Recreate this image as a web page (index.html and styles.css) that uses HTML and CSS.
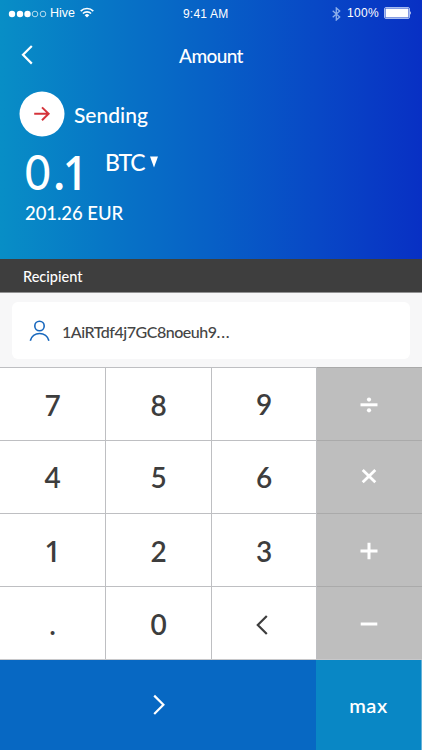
FILE: index.html
```html
<!DOCTYPE html>
<html lang="en">
<head>
<meta charset="utf-8">
<title>Amount</title>
<link rel="stylesheet" href="styles.css">
</head>
<body>
<main class="screen">
  <header class="hero">
    <div class="status">
      <div class="status-left">
        <svg class="signal" width="39" height="8" viewBox="0 0 39 8"><g fill="#fff"><circle cx="4" cy="4" r="3.2"/><circle cx="12" cy="4" r="3.2"/><circle cx="19.5" cy="4" r="3.2"/></g><g fill="none" stroke="#fff" stroke-width=".7"><circle cx="27" cy="4" r="2.8"/><circle cx="35" cy="4" r="2.8"/></g></svg>
        <span class="carrier">Hive</span>
        <svg class="wifi" width="14" height="11" viewBox="0 0 14 11"><g fill="none" stroke="#fff" stroke-width="1.6"><path d="M.7 4.1a9 9 0 0 1 12.6 0"/><path d="M2.9 6.5a5.9 5.9 0 0 1 8.2 0"/></g><path d="M4.7 8.3a3.2 3.2 0 0 1 4.6 0L7 10.6z" fill="#fff"/></svg>
      </div>
      <span class="clock">9:41 AM</span>
      <div class="status-right">
        <svg class="bluetooth" width="9" height="14" viewBox="0 0 9 14"><path d="M.7 3.7l7 6.2L4.3 13V1l3.4 3.1-7 6.2" fill="none" stroke="#8eb0eb" stroke-width="1.3"/></svg>
        <span class="percent">100%</span>
        <svg class="battery" width="28" height="12" viewBox="0 0 28 12"><rect x=".5" y=".5" width="25" height="11" rx="1.5" fill="none" stroke="#a8bdf0"/><rect x="1.5" y="1.5" width="23" height="9" rx=".5" fill="#fff"/><path d="M26.2 4q1.6 2 0 4z" fill="#fff"/></svg>
      </div>
    </div>
    <div class="nav">
      <svg class="back" width="14" height="22" viewBox="0 0 14 22"><path d="M11.8 2L3 10.8l8.8 8.8" fill="none" stroke="#fff" stroke-width="2.2"/></svg>
      <h1 class="title">Amount</h1>
    </div>
    <div class="direction">
      <svg class="badge" width="46" height="46" viewBox="0 0 46 46"><circle cx="23" cy="23" r="22.5" fill="#fff"/><path d="M15.2 22.8h14.4M23 16.4l6.6 6.4-6.6 6.4" fill="none" stroke="#d5343b" stroke-width="2"/></svg>
      <span class="sending">Sending</span>
    </div>
    <div class="amount">
      <span class="value">0<span class="point">.</span><span class="one">1</span></span>
      <span class="currency">BTC</span>
      <svg class="caret" width="8" height="12" viewBox="0 0 8 12"><path d="M0 .5h8L4 11.5z" fill="#fff"/></svg>
    </div>
    <div class="fiat">201.26 EUR</div>
  </header>
  <h2 class="section"><span class="section-label">Recipient</span></h2>
  <div class="panel">
    <div class="field">
      <svg class="person" width="22" height="22" viewBox="0 0 22 22"><g fill="none" stroke="#1767bd" stroke-width="1.6"><circle cx="10.5" cy="6" r="4.7"/><path d="M1.3 20.7a9.6 9.6 0 0 1 18.6 0"/></g></svg>
      <span class="address">1AiRTdf4j7GC8noeuh9<span class="dots">...</span></span>
    </div>
  </div>
  <div class="keypad">
    <div class="key"><span>7</span></div><div class="key"><span>8</span></div><div class="key nine"><span>9</span></div>
    <div class="key op"><svg width="18" height="18" viewBox="0 0 18 18"><path d="M.5 8.8h17" stroke="#fff" stroke-width="3"/><circle cx="9" cy="3.6" r="2.1" fill="#fff"/><circle cx="9" cy="14.3" r="2.1" fill="#fff"/></svg></div>
    <div class="key four"><span>4</span></div><div class="key four"><span>5</span></div><div class="key four"><span>6</span></div>
    <div class="key op times"><svg width="18" height="18" viewBox="0 0 18 18"><path d="M2.7 3l12.6 12.3M15.3 3L2.7 15.3" stroke="#fff" stroke-width="2.8"/></svg></div>
    <div class="key"><span class="one">1</span></div><div class="key"><span>2</span></div><div class="key"><span>3</span></div>
    <div class="key op"><svg width="18" height="18" viewBox="0 0 18 18"><path d="M.5 9h17M9 .8v16.4" stroke="#fff" stroke-width="3"/></svg></div>
    <div class="key"><span>.</span></div><div class="key"><span>0</span></div>
    <div class="key erase"><svg width="14" height="22" viewBox="0 0 14 22"><path d="M11.8 2L2.8 11l9 9" fill="none" stroke="#3d3d3d" stroke-width="2.2"/></svg></div>
    <div class="key op"><svg width="18" height="18" viewBox="0 0 18 18"><path d="M.7 9h16.6" stroke="#fff" stroke-width="3"/></svg></div>
  </div>
  <footer class="actions">
    <div class="next"><svg width="14" height="22" viewBox="0 0 14 22"><path d="M2.2 1.6l9.2 9.2-9.2 9.2" fill="none" stroke="#fff" stroke-width="2.2"/></svg></div>
    <div class="max"><span>max</span></div>
  </footer>
</main>
</body>
</html>
```
FILE: styles.css
```css
* { box-sizing: border-box; }
body { margin: 0; font-family: Lato, "Liberation Sans", sans-serif; }
svg { display: block; flex: none; }
span { white-space: nowrap; }
.screen { width: 422px; height: 750px; overflow: hidden; display: flex; flex-direction: column; background: #fff; }
.hero { height: 259px; color: #fff; background: linear-gradient(90deg, #088ec6 0%, #0776c6 25%, #0760c6 50%, #0848c6 75%, #0830c4 100%); }
.status { height: 26px; display: grid; grid-template-columns: 183px auto 1fr; font: 12px/14px "Liberation Sans", sans-serif; }
.status-left, .status-right { display: flex; align-items: flex-start; }
.status-left { padding-left: 8px; }
.signal { margin-top: 10px; }
.carrier { margin: 6px 0 0 3px; font-size: 12.5px; }
.wifi { margin: 7px 0 0 5px; }
.clock { margin-top: 7px; font-size: 12px; letter-spacing: .2px; }
.status-right { justify-content: flex-end; padding-right: 10px; }
.bluetooth { margin: 7px 6px 0 0; }
.percent { margin: 6px 5px 0 0; letter-spacing: .3px; }
.battery { margin-top: 7px; }
.nav { height: 58px; display: grid; grid-template-columns: 1fr auto 1fr; align-items: start; }
.back { margin: 18px 0 0 20px; }
.title { margin: 19px 0 0; font-size: 19px; line-height: 22px; font-weight: 500; letter-spacing: -.6px; }
.direction { display: flex; padding: 7px 0 0 19px; height: 60px; }
.sending { margin: 11px 0 0 9px; font-size: 21px; line-height: 26px; font-weight: 500; }
.amount { display: flex; height: 55px; padding-left: 25px; }
.value { display: flex; flex: none; width: 80px; font-size: 48px; line-height: 56px; font-weight: 500; transform: scaleX(.91); transform-origin: left; }
.point { width: 14px; margin-left: 4px; font-weight: 700; }
.value .one { margin-left: -4px; font-weight: 600; font-size: 47px; }
.one { font-family: "Open Sans", Lato, sans-serif; }
.currency { margin-top: 5px; font-size: 23px; line-height: 26px; letter-spacing: -1.2px; font-weight: 500; }
.caret { margin: 12px 0 0 5.5px; }
.fiat { padding: 1px 0 0 25px; font-size: 18.5px; line-height: 27px; font-weight: 500; letter-spacing: -.05px; }
.section { margin: 0; height: 34px; padding: 8px 23px; background: #3e3e3e; border-bottom: 1px solid #929292; color: #fff; font-size: 14.5px; line-height: 19px; font-weight: 500; }
.panel { height: 74px; padding: 9px 12px; background: #f7f7f8; }
.field { height: 57px; padding: 18px 17px 0; display: flex; background: #fff; border-radius: 6px; color: #454545; }
.address { margin-left: 11px; font-size: 16px; line-height: 23px; font-weight: 500; letter-spacing: -.48px; }
.dots { letter-spacing: .9px; }
.keypad { height: 293px; padding-top: 1px; background: #bebfc2; display: grid; grid-template-columns: 105px 105px 104px 106px; grid-template-rows: repeat(4, 72px); gap: 1px; border-bottom: 1px solid #c8c8ca; }
.key { display: flex; align-items: center; justify-content: center; background: #fff; color: #3d3d3d; font-size: 28px; line-height: 34px; font-weight: 600; padding: 2px 0 0; }
.four, .nine { padding-top: 0; }
.op { background: #bebebe; padding: 1px 2px 0 0; border-right: 1px solid #dedede; box-shadow: 0 -1px #aaa; }
.times { padding: 0 2px 2px 0; }
.erase { padding: 4px 5px 0 0; }
.actions { height: 90px; display: grid; grid-template-columns: 316px 105px; background: #65b2d8; }
.next { display: flex; justify-content: center; align-items: center; padding-left: 1px; background: #0768c3; }
.max { display: flex; justify-content: center; align-items: center; background: #0987c5; color: #fff; font-size: 20px; line-height: 24px; font-weight: 600; letter-spacing: .6px; }
```
